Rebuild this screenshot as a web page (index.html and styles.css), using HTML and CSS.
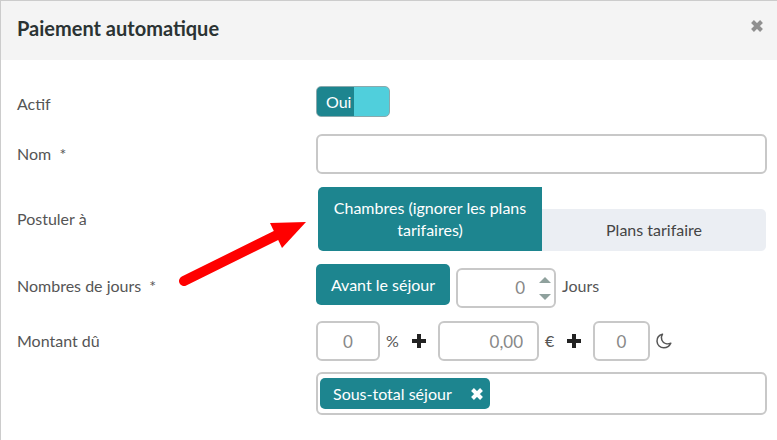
FILE: index.html
```html
<!DOCTYPE html>
<html lang="fr">
<head>
    <meta charset="UTF-8">
    <meta name="viewport" content="width=device-width, initial-scale=1.0">
    <title>Paiement automatique</title>
    <link rel="stylesheet" href="styles.css">
</head>
<body>
    <div class="modal">
        <header class="modal-header">
            <h1>Paiement automatique</h1>
            <button type="button" class="close" aria-label="Fermer">
                <svg width="14" height="14" viewBox="0 0 14 14"><path d="M2.500 2.500l9 9M11.500 2.500l-9 9" stroke="currentColor" stroke-width="4"/></svg>
            </button>
        </header>

        <form class="form">
            <div class="row row-switch">
                <label class="label" for="actif">Actif</label>
                <div class="switch">
                    <input type="checkbox" id="actif" checked>
                    <span class="switch-text">Oui</span>
                </div>
            </div>

            <div class="row">
                <label class="label" for="nom">Nom &nbsp;*</label>
                <input type="text" id="nom" class="input">
            </div>

            <div class="row">
                <span class="label" id="postuler">Postuler à</span>
                <div class="tabs" role="group" aria-labelledby="postuler">
                    <button type="button" class="tab active">Chambres (ignorer les plans tarifaires)</button>
                    <button type="button" class="tab">Plans tarifaire</button>
                </div>
            </div>

            <div class="row">
                <label class="label" for="jours">Nombres de jours &nbsp;*</label>
                <div class="days">
                    <button type="button" class="btn">Avant le séjour</button>
                    <div class="input stepper">
                        <input type="number" id="jours" value="0">
                        <div class="arrows">
                            <button type="button" aria-label="Plus"><svg width="12" height="6" viewBox="0 0 12 6"><path d="M0 6L6 0l6 6z"/></svg></button>
                            <button type="button" aria-label="Moins"><svg width="12" height="6" viewBox="0 0 12 6"><path d="M0 0l6 6 6-6z"/></svg></button>
                        </div>
                    </div>
                    <label class="unit" for="jours">Jours</label>
                </div>
            </div>

            <div class="row row-amount">
                <label class="label" for="pourcent">Montant dû</label>
                <div class="amount">
                    <div class="amount-line">
                        <input type="text" id="pourcent" class="input percent" value="0">
                        <label class="unit" for="pourcent">%</label>
                        <svg class="plus" width="14" height="14" viewBox="0 0 14 14"><path d="M7 0v14M0 7h14" stroke="currentColor" stroke-width="4"/></svg>
                        <input type="text" id="euros" class="input euros" value="0,00">
                        <label class="unit unit-euro" for="euros">€</label>
                        <svg class="plus" width="14" height="14" viewBox="0 0 14 14"><path d="M7 0v14M0 7h14" stroke="currentColor" stroke-width="4"/></svg>
                        <input type="text" id="nuits" class="input nights" value="0">
                        <label class="moon" for="nuits" aria-label="Nuits">
                            <svg width="16" height="16" viewBox="0 0 16 16"><path d="M6.500 1.200C2.900 2 .9 4.900 1 8.300c.2 3.700 3.200 6.500 6.800 6.500 3.200 0 5.700-1.700 7-4.500-4 1.300-7.700-.2-9-3.300-.8-2-.5-4 .7-5.800z" fill="none" stroke="currentColor" stroke-width="1.500" stroke-linejoin="round"/></svg>
                        </label>
                    </div>
                    <div class="input tags">
                        <span class="tag">Sous-total séjour
                            <button type="button" aria-label="Retirer">
                                <svg width="14" height="14" viewBox="0 0 14 14"><path d="M2.500 2.500l9 9M11.500 2.500l-9 9" stroke="currentColor" stroke-width="4"/></svg>
                            </button>
                        </span>
                    </div>
                </div>
            </div>

            <svg class="pointer" width="130" height="70" viewBox="0 0 130 70">
                <path d="M7 63L100 17" stroke="#f00" stroke-width="10" stroke-linecap="round"/>
                <path d="M93 5l36-1-24 26z" fill="#f00"/>
            </svg>
        </form>
    </div>
</body>
</html>
```

FILE: styles.css
```css
* {
    box-sizing: border-box;
}
body {
    margin: 0;
    background: #fff;
    color: #555;
    font-family: Lato, "Open Sans", sans-serif;
    font-size: 16px;
    line-height: 22px;
}
button, input {
    font: inherit;
    color: inherit;
}
button {
    border: none;
    padding: 0;
    background: none;
    cursor: pointer;
}
svg {
    display: block;
}
.modal {
    min-height: 100vh;
    border-top: 1px solid #ccc;
    border-left: 1px solid #ccc;
}
.modal-header {
    display: flex;
    justify-content: space-between;
    align-items: center;
    padding: 13px 13px 18px 16px;
    background: #f4f4f4;
}
.modal-header h1 {
    margin: 0;
    font-size: 20px;
    line-height: 28px;
    color: #2b3333;
}
.close {
    color: #909090;
    margin-bottom: 4px;
}
.form {
    position: relative;
    display: flex;
    flex-direction: column;
    gap: 13px;
    padding: 26px 10px 24px 16px;
}
.row {
    display: grid;
    grid-template-columns: 299px 1fr;
    align-items: center;
}
.input {
    width: 100%;
    height: 40px;
    border: 2px solid #c8c8c8;
    border-radius: 6px;
    background: #fff;
    padding: 0 14px;
    color: #888;
    font-size: 17px;
}

/* Interrupteur */
.row-switch {
    min-height: 35px;
}
.switch {
    position: relative;
    align-self: start;
    width: 74px;
    height: 31px;
}
.switch input {
    appearance: none;
    display: block;
    width: 100%;
    height: 100%;
    margin: 0;
    border: 1px solid #8aa9ad;
    border-radius: 5px;
    background: linear-gradient(to right, #1d858f 37px, #50cfdc 37px);
}
.switch-text {
    position: absolute;
    top: 5px;
    left: 10px;
    color: #fff;
    pointer-events: none;
}

/* Onglets */
.tabs {
    display: flex;
    align-items: flex-end;
    margin: 0 1px 0 2px;
}
.tab {
    flex: 1;
    padding: 10px 12px;
    background: #ebeef3;
    border-radius: 0 5px 5px 0;
    color: #444;
}
.tab.active {
    background: #1d858f;
    border-radius: 5px 0 0 5px;
    color: #fff;
}

/* Jours */
.days {
    display: flex;
    height: 44px;
    gap: 6px;
}
.btn {
    width: 134px;
    height: 41px;
    border-radius: 5px;
    background: #1d858f;
    color: #fff;
}
.stepper {
    display: flex;
    align-items: center;
    align-self: flex-end;
    gap: 14px;
    width: 100px;
    padding: 0 3px 0 8px;
}
.stepper input {
    flex: 1;
    min-width: 0;
    padding: 0;
    border: none;
    outline: none;
    text-align: right;
    appearance: textfield;
}
.stepper input::-webkit-inner-spin-button {
    appearance: none;
    margin: 0;
}
.arrows {
    display: flex;
    flex-direction: column;
    gap: 11px;
    fill: #8fa19d;
}
.days .unit {
    line-height: 44px;
}

/* Montant */
.row-amount {
    align-items: start;
}
.row-amount .label {
    line-height: 40px;
}
.amount {
    display: flex;
    flex-direction: column;
    gap: 11px;
}
.amount-line {
    display: flex;
    align-items: center;
}
.percent {
    width: 64px;
    text-align: center;
}
.euros {
    width: 101px;
    text-align: right;
}
.nights {
    width: 57px;
    text-align: center;
}
.amount-line .unit {
    width: 32px;
    padding-left: 6px;
}
.amount-line .unit-euro {
    width: 28px;
}
.plus {
    margin-right: 12px;
    color: #222;
}
.moon {
    margin-left: 6px;
    color: #555;
}
.tags {
    display: flex;
    height: 43px;
    padding: 4px 2px;
}
.tag {
    display: flex;
    align-items: center;
    gap: 18px;
    height: 31px;
    padding: 0 6px 0 13px;
    border-radius: 5px;
    background: #1d858f;
    color: #fff;
    font-size: 16px;
}

/* Flèche */
.pointer {
    position: absolute;
    top: 158px;
    left: 176px;
    fill: none;
}
```
